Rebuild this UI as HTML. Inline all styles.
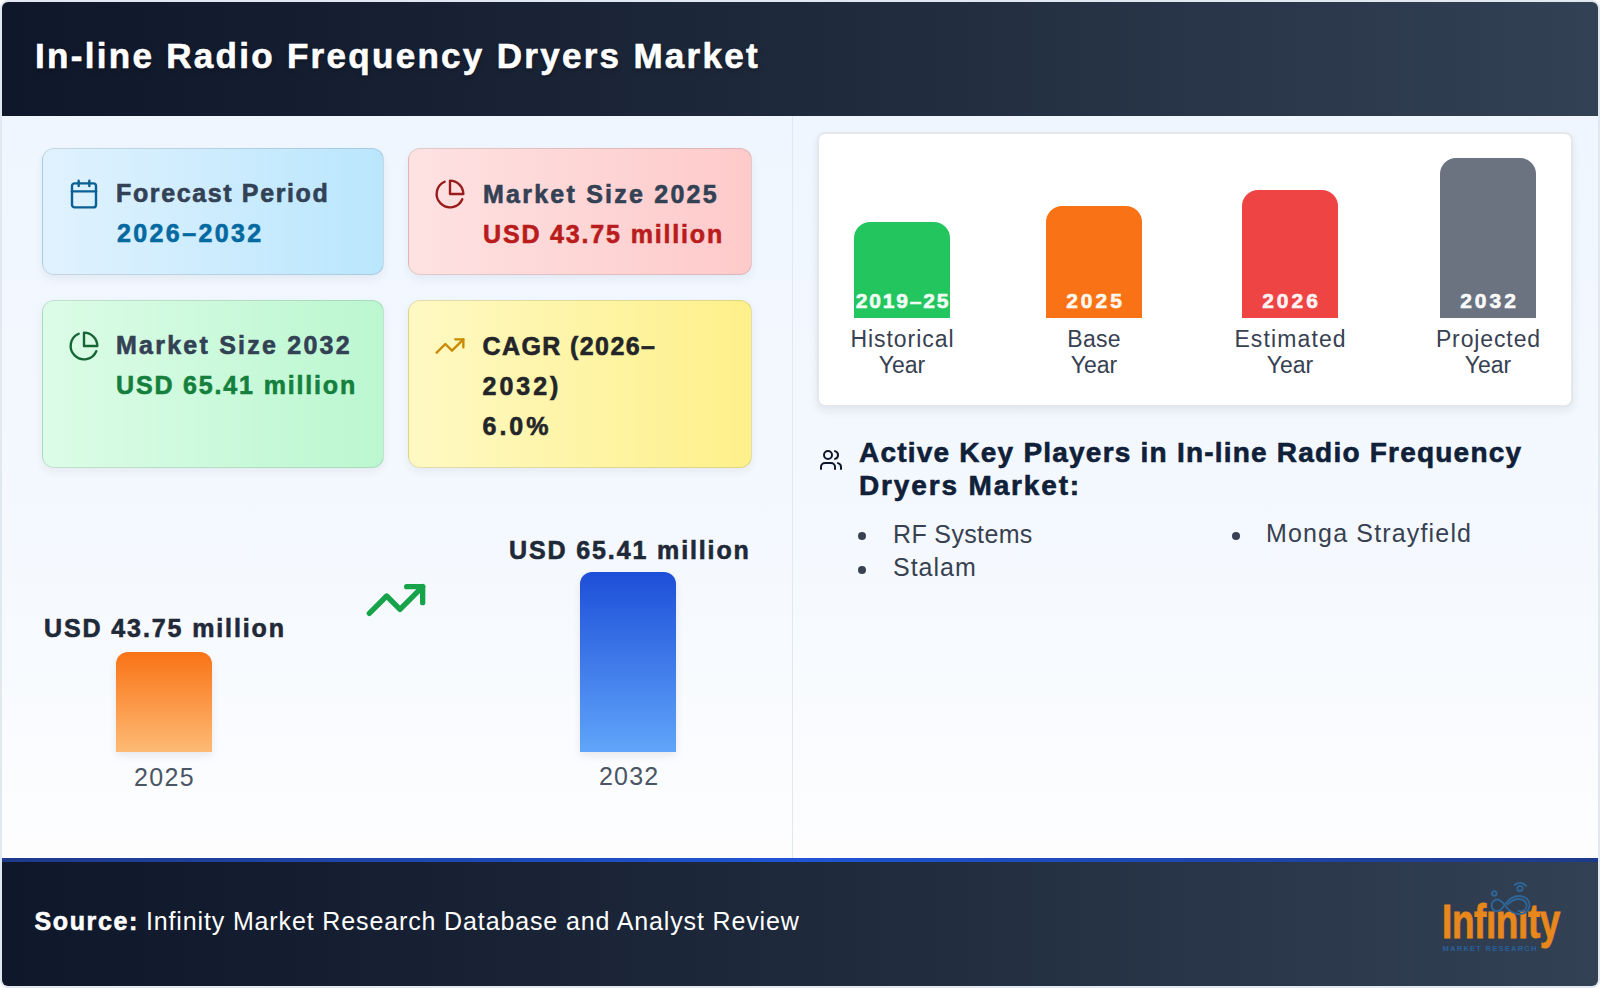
<!DOCTYPE html>
<html>
<head>
<meta charset="utf-8">
<style>
*{box-sizing:border-box;margin:0;padding:0}
html,body{width:1600px;height:988px;overflow:hidden;background:#ffffff}
body{font-family:"Liberation Sans",sans-serif;position:relative}
#frame{position:absolute;left:0;top:0;width:1600px;height:988px;border:2px solid #e2e8f0;border-radius:8px;overflow:hidden;background:#fff}
.abs{position:absolute}
.t{position:absolute;white-space:nowrap;line-height:1}
.b{font-weight:700;-webkit-text-stroke:0.6px currentColor}

.t.b{-webkit-text-stroke:0.6px currentColor}
#header{position:absolute;left:0;top:0;width:1596px;height:114px;background:linear-gradient(90deg,#0f172a 0%,#1e293b 50%,#334155 100%)}
#main{position:absolute;left:0;top:114px;width:1596px;height:742px;background:linear-gradient(180deg,#eff6ff 0%,#f5f9fe 62%,#fdfdfe 100%)}
#divider{position:absolute;left:790px;top:114px;width:1px;height:742px;background:#e2e8f0}
#footer{position:absolute;left:0;top:856px;width:1596px;height:128px;background:linear-gradient(90deg,#0f172a 0%,#1e293b 50%,#334155 100%);}
#fline{position:absolute;left:0;top:856px;width:1596px;height:4px;background:linear-gradient(90deg,#1e3a8a 0%,#1f55d6 50%,#1e3a8a 100%)}
.card{position:absolute;border-radius:12px;border:1px solid rgba(15,23,42,0.12);box-shadow:0 4px 10px rgba(15,23,42,0.06)}
.ttl{color:#334155}
</style>
</head>
<body>
<div id="frame">
  <div id="header"></div>
  <div id="main"></div>
  <div id="divider"></div>
  <div id="footer"></div>
  <div id="fline"></div>
</div>

<!-- header title -->
<div class="t b" style="left:35px;top:38px;font-size:35px;letter-spacing:2.3px;color:#fff;text-shadow:0 2px 4px rgba(0,0,0,0.35)">In-line Radio Frequency Dryers Market</div>

<!-- cards -->
<div class="card" style="left:42px;top:148px;width:342px;height:127px;background:linear-gradient(90deg,#e0f2fe,#bae6fd)"></div>
<div class="card" style="left:408px;top:148px;width:344px;height:127px;background:linear-gradient(90deg,#fee2e2,#fecaca)"></div>
<div class="card" style="left:42px;top:300px;width:342px;height:168px;background:linear-gradient(90deg,#dcfce7,#bbf7d0)"></div>
<div class="card" style="left:408px;top:300px;width:344px;height:168px;background:linear-gradient(90deg,#fef9c3,#fef08a)"></div>


<!-- card icons -->
<svg class="abs" style="left:68px;top:177.7px" width="32" height="32" viewBox="0 0 24 24" fill="none" stroke="#0a5f94" stroke-width="1.8" stroke-linecap="round" stroke-linejoin="round"><path d="M8 2v4"/><path d="M16 2v4"/><rect width="18" height="18" x="3" y="4" rx="2"/><path d="M3 10h18"/></svg>
<svg class="abs" style="left:434px;top:177.7px" width="32" height="32" viewBox="0 0 24 24" fill="none" stroke="#991b1b" stroke-width="1.8" stroke-linecap="round" stroke-linejoin="round"><path d="M21.21 15.89A10 10 0 1 1 8 2.83"/><path d="M22 12A10 10 0 0 0 12 2v10z"/></svg>
<svg class="abs" style="left:68px;top:329.7px" width="32" height="32" viewBox="0 0 24 24" fill="none" stroke="#166534" stroke-width="1.8" stroke-linecap="round" stroke-linejoin="round"><path d="M21.21 15.89A10 10 0 1 1 8 2.83"/><path d="M22 12A10 10 0 0 0 12 2v10z"/></svg>
<svg class="abs" style="left:434px;top:329.5px" width="32" height="32" viewBox="0 0 24 24" fill="none" stroke="#ca8a04" stroke-width="1.8" stroke-linecap="round" stroke-linejoin="round"><polyline points="22 7 13.5 15.5 8.5 10.5 2 17"/><polyline points="16 7 22 7 22 13"/></svg>

<!-- card texts -->
<div class="t b ttl" style="left:116px;top:180.8px;font-size:25px;letter-spacing:1.63px">Forecast Period</div>
<div class="t b" style="left:117px;top:220.6px;font-size:25px;letter-spacing:2.38px;color:#0369a1">2026–2032</div>
<div class="t b ttl" style="left:483px;top:182px;font-size:25px;letter-spacing:2.23px">Market Size 2025</div>
<div class="t b" style="left:483px;top:221.8px;font-size:25px;letter-spacing:1.84px;color:#b91c1c">USD 43.75 million</div>
<div class="t b ttl" style="left:116px;top:332.5px;font-size:25px;letter-spacing:2.23px">Market Size 2032</div>
<div class="t b" style="left:116px;top:372.6px;font-size:25px;letter-spacing:1.84px;color:#15803d">USD 65.41 million</div>
<div class="t b" style="left:482.5px;top:334.2px;font-size:25px;letter-spacing:1.4px;color:#232529">CAGR (2026–</div>
<div class="t b" style="left:482.5px;top:374px;font-size:25px;letter-spacing:3px;color:#232529">2032)</div>
<div class="t b" style="left:482.5px;top:413.5px;font-size:25px;letter-spacing:3px;color:#232529">6.0%</div>

<!-- left chart -->
<div class="t b" style="left:44px;top:616px;font-size:25px;letter-spacing:1.89px;color:#1f2937">USD 43.75 million</div>
<div class="abs" style="left:116px;top:652px;width:96px;height:100px;border-radius:12px 12px 0 0;background:linear-gradient(180deg,#f97316,#fdba74);box-shadow:0 4px 8px rgba(15,23,42,0.08)"></div>
<div class="t" style="left:134px;top:764.5px;font-size:25px;letter-spacing:1.37px;color:#4b5563">2025</div>
<div class="t b" style="left:509px;top:537.5px;font-size:25px;letter-spacing:1.88px;color:#1f2937">USD 65.41 million</div>
<div class="abs" style="left:580px;top:572px;width:96px;height:180px;border-radius:12px 12px 0 0;background:linear-gradient(180deg,#1d4ed8,#60a5fa);box-shadow:0 4px 8px rgba(15,23,42,0.08)"></div>
<div class="t" style="left:599px;top:763.8px;font-size:25px;letter-spacing:1.2px;color:#4b5563">2032</div>
<svg class="abs" style="left:364px;top:568px" width="64" height="64" viewBox="0 0 24 24" fill="none" stroke="#16a34a" stroke-width="2" stroke-linecap="round" stroke-linejoin="round"><polyline points="22 7 13.5 15.5 8.5 10.5 2 17"/><polyline points="16 7 22 7 22 13"/></svg>

<!-- right card -->
<div class="abs" style="left:817px;top:132px;width:756px;height:275px;background:#fff;border:2px solid #e5e7eb;border-radius:8px;box-shadow:0 4px 8px rgba(15,23,42,0.08)"></div>
<div class="abs" style="left:854px;top:222px;width:96px;height:96px;border-radius:16px 16px 0 0;background:#22c55e"></div>
<div class="abs" style="left:1046px;top:206px;width:96px;height:112px;border-radius:16px 16px 0 0;background:#f97316"></div>
<div class="abs" style="left:1242px;top:190px;width:96px;height:128px;border-radius:16px 16px 0 0;background:#ef4444"></div>
<div class="abs" style="left:1440px;top:158px;width:96px;height:160px;border-radius:16px 16px 0 0;background:#6b7280"></div>

<div class="t b" style="left:802px;width:200px;text-align:center;top:290.3px;font-size:21px;letter-spacing:1.82px;padding-left:1.82px;color:#f0fdf4">2019–25</div>
<div class="t b" style="left:994px;width:200px;text-align:center;top:290.3px;font-size:21px;letter-spacing:3px;padding-left:3px;color:#fff7ed">2025</div>
<div class="t b" style="left:1190px;width:200px;text-align:center;top:290.3px;font-size:21px;letter-spacing:3px;padding-left:3px;color:#fef2f2">2026</div>
<div class="t b" style="left:1388px;width:200px;text-align:center;top:290.3px;font-size:21px;letter-spacing:3px;padding-left:3px;color:#f9fafb">2032</div>

<div class="t" style="left:802px;width:200px;text-align:center;top:327.5px;font-size:23px;letter-spacing:0.94px;padding-left:0.94px;color:#374151">Historical</div>
<div class="t" style="left:802px;width:200px;text-align:center;top:353.8px;font-size:23px;letter-spacing:0px;color:#374151">Year</div>
<div class="t" style="left:994px;width:200px;text-align:center;top:327.5px;font-size:23px;letter-spacing:0.3px;padding-left:0.3px;color:#374151">Base</div>
<div class="t" style="left:994px;width:200px;text-align:center;top:353.8px;font-size:23px;letter-spacing:0px;color:#374151">Year</div>
<div class="t" style="left:1190px;width:200px;text-align:center;top:327.5px;font-size:23px;letter-spacing:1.12px;padding-left:1.12px;color:#374151">Estimated</div>
<div class="t" style="left:1190px;width:200px;text-align:center;top:353.8px;font-size:23px;letter-spacing:0px;color:#374151">Year</div>
<div class="t" style="left:1388px;width:200px;text-align:center;top:327.5px;font-size:23px;letter-spacing:0.88px;padding-left:0.88px;color:#374151">Projected</div>
<div class="t" style="left:1388px;width:200px;text-align:center;top:353.8px;font-size:23px;letter-spacing:0px;color:#374151">Year</div>

<!-- key players -->
<svg class="abs" style="left:818.5px;top:448px" width="24" height="24" viewBox="0 0 24 24" fill="none" stroke="#0f172a" stroke-width="2" stroke-linecap="round" stroke-linejoin="round"><path d="M16 21v-2a4 4 0 0 0-4-4H6a4 4 0 0 0-4 4v2"/><circle cx="9" cy="7" r="4"/><path d="M22 21v-2a4 4 0 0 0-3-3.87"/><path d="M16 3.13a4 4 0 0 1 0 7.75"/></svg>
<div class="t b" style="left:859px;top:438.8px;font-size:28px;letter-spacing:1.22px;color:#0f2038">Active Key Players in In-line Radio Frequency</div>
<div class="t b" style="left:859px;top:471.5px;font-size:28px;letter-spacing:1.85px;color:#0f2038">Dryers Market:</div>
<div class="abs" style="left:858px;top:532px;width:8px;height:8px;border-radius:50%;background:#374151"></div>
<div class="abs" style="left:858px;top:566px;width:8px;height:8px;border-radius:50%;background:#374151"></div>
<div class="abs" style="left:1232px;top:532px;width:8px;height:8px;border-radius:50%;background:#374151"></div>
<div class="t" style="left:893px;top:522px;font-size:25px;letter-spacing:0.36px;color:#374151">RF Systems</div>
<div class="t" style="left:893px;top:555.3px;font-size:25px;letter-spacing:1px;color:#374151">Stalam</div>
<div class="t" style="left:1266px;top:520.6px;font-size:25px;letter-spacing:1.16px;color:#374151">Monga Strayfield</div>

<!-- footer -->
<div class="t" style="left:34.5px;top:908.8px;font-size:25px;color:#fff"><span class="b" style="letter-spacing:1.62px">Source:</span> <span style="letter-spacing:0.87px">Infinity Market Research Database and Analyst Review</span></div>

<!-- logo -->
<svg class="abs" style="left:1430px;top:875px" width="140" height="85" viewBox="0 0 140 85">
  <text x="12" y="63.4" font-family="Liberation Sans" font-weight="700" font-size="48" fill="#e8871c" stroke="#e8871c" stroke-width="0.8" transform="translate(12 0) scale(0.77 1) translate(-12 0)" letter-spacing="-0.5">Inf&#305;n&#305;ty</text>
  <g fill="none" stroke="#2f6596" stroke-width="1.9" stroke-linecap="round">
    <path d="M74.5 30 C70.5 24.5 67 23.5 64 25.5 C60.5 28 61 34 65 36 C69 37.5 72 34 74.5 30 C78 25 83 21 89 21 C96 21 100 25.5 99.5 31 C99 36.5 94 39.5 88 39 C82 38.5 78 34.5 74.5 30 Z"/>
    <path d="M77.5 29.5 C80.5 26.5 84.5 24 89 24 C94 24 97 27.5 96.5 31.5 C96 35 92.5 36.5 88.5 36"/>
    <circle cx="64.3" cy="18.5" r="2.3"/>
    <circle cx="90" cy="13.5" r="2.6"/>
    <path d="M84.5 10 C88 7 93.5 7.5 96 11"/>
  </g>
  <text x="12.5" y="76" font-family="Liberation Sans" font-weight="700" font-size="7.6" fill="#2a5f9c" letter-spacing="1.2">MARKET RESEARCH</text>
</svg>

</body>
</html>
